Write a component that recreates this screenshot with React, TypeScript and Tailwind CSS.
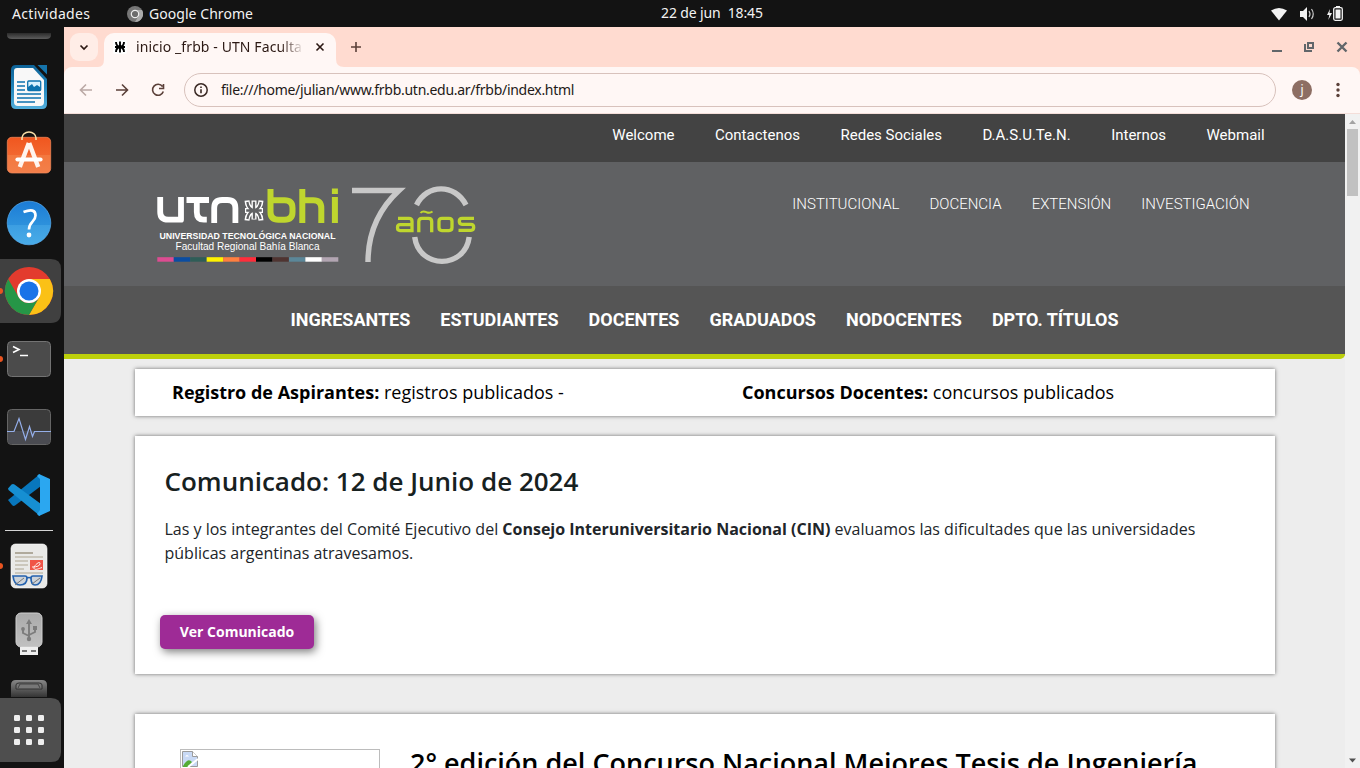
import React from 'react';

const stripes = ['#dd4c92', '#0b4da2', '#2f5d57', '#fff200', '#ff7f40', '#ff2d3b', '#000000', '#4f3431', '#5b8799', '#ffffff', '#b2a5b2'];

function TopBar() {
  return (
    <div className="flex h-[27px] w-full shrink-0 items-center bg-[#131313] pl-3 pr-4 text-[14px] leading-none text-[#f2f2f2]">
      <span className="w-[79px] tracking-[0.32px]">Actividades</span>
      <div className="ml-[36px] flex w-[534px] items-center gap-[6px]">
        <svg className="size-4 shrink-0" viewBox="0 0 16 16">
          <circle cx="8" cy="8" r="8" fill="#777" />
          <path d="M8 4h7A8 8 0 0 1 8 16l3.500-6Z" fill="#aaa" />
          <circle cx="8" cy="8" r="3.700" fill="#6c6c6c" stroke="#eee" strokeWidth="1.200" />
        </svg>
        <span className="tracking-[0.05px]">Google Chrome</span>
      </div>
      <span className="-mt-px whitespace-pre tracking-[-0.12px]">22 de jun  18:45</span>
      <svg className="ml-auto h-4 w-[74px] shrink-0" viewBox="1270 5 74 16" fill="#f2f2f2">
        <path d="M1271 9.500Q1279 4.500 1287 9.500L1279 19.500Z" />
        <path d="M1300 10h3l4-4v14l-4-4h-3Z" />
        <path d="M1309 10q2 3 0 6M1311.500 8q3.500 5 0 10" fill="none" stroke="#ccc" strokeWidth="1.200" />
        <path d="M1330 8l-3 6h2.300l-1 5 3.700-7h-2.500Z" />
        <rect x="1333.700" y="6.700" width="8.600" height="12.600" rx="1.500" fill="none" stroke="#f2f2f2" strokeWidth="1.300" />
        <path d="M1336 5h4v1.500h-4ZM1335.500 8.500h5v9h-5Z" />
      </svg>
    </div>
  );
}

function Dock() {
  return (
    <svg className="h-[741px] w-16 shrink-0 bg-[#131313]" viewBox="0 27 64 741">
      <defs>
        <linearGradient id="gray" x1="0" y1="0" x2="0" y2="1"><stop stopColor="#2b2b2b" /><stop offset="1" stopColor="#5c5c5c" /></linearGradient>
        <linearGradient id="doc" x1="0" y1="0" x2="0" y2="1"><stop stopColor="#0d6297" /><stop offset=".5" stopColor="#2083b9" /><stop offset="1" stopColor="#53afdc" /></linearGradient>
        <linearGradient id="bag" x1="0" y1="0" x2="0" y2="1"><stop stopColor="#f0561f" /><stop offset=".5" stopColor="#f2672f" /><stop offset=".51" stopColor="#f3783f" /><stop offset="1" stopColor="#f37f4a" /></linearGradient>
        <linearGradient id="help" x1="0" y1="0" x2="0" y2="1"><stop stopColor="#1c7cd6" /><stop offset=".54" stopColor="#2d91dc" /><stop offset=".55" stopColor="#3c9ee2" /><stop offset="1" stopColor="#49ace8" /></linearGradient>
        <linearGradient id="usb" x1="0" y1="0" x2="0" y2="1"><stop stopColor="#aaa" /><stop offset="1" stopColor="#c0c0c0" /></linearGradient>
        <linearGradient id="drive" x1="0" y1="0" x2="0" y2="1"><stop stopColor="#888" /><stop offset="1" stopColor="#343434" /></linearGradient>
      </defs>
      <path d="M7 33h44v2q0 4-5 4H12q-5 0-5-4Z" fill="url(#gray)" />

      <path d="M16 65h18l13 14v25q0 5-5 5H16q-5 0-5-5V70q0-5 5-5Z" fill="url(#doc)" />
      <path d="M17 68h16l11 12v22q0 4-4 4H18q-4 0-4-4V71q0-3 3-3Z" fill="#f8f8f8" />
      <path d="M37.500 65H47v9.500Z" fill="#1574ab" />
      <path d="M17 82h8M17 86h8M17 90h8M17 94h24M17 98h24M17 102h18" stroke="#0d72ae" strokeWidth="1.700" />
      <rect x="27.700" y="81" width="13" height="9.500" rx="1" fill="#d8f1ff" stroke="#0d72ae" strokeWidth="1.300" />
      <path d="M28 90v-3l4-3 2 3 3-2 3 2v3Z" fill="#0d72ae" />

      <rect x="7.300" y="137.300" width="43.400" height="35.700" rx="4.500" fill="url(#bag)" stroke="#f58a5c" strokeWidth=".7" />
      <path d="M22 140v-2a7 6 0 0 1 14 0v2" fill="none" stroke="#f8dda6" strokeWidth="1.600" />
      <path d="M28.800 143l-9 24M29.200 143l9 24" stroke="#fff4ee" strokeWidth="4.400" />
      <path d="M17.500 159.500h23" stroke="white" strokeWidth="4.200" strokeLinecap="round" />

      <circle cx="29" cy="223" r="21.800" fill="url(#help)" stroke="#58adf0" strokeWidth=".7" />
      <path d="M23.500 212q12-4.500 12 3.500c0 6.500-6.500 6-6.500 14" fill="none" stroke="white" strokeWidth="2.700" />
      <circle cx="29" cy="235" r="2.400" fill="white" />

      <path d="M0 259h51q10 0 10 10v43q0 11-10 11H0Z" fill="#404040" />
      <circle cx="29" cy="291" r="24" fill="#e33b2e" />
      <path d="M29 279h20.800A24 24 0 0 1 29 315l10.400-18Z" fill="#fbc116" />
      <path d="M8.200 279l10.400 18A12 12 0 0 0 39.400 297L29 315A24 24 0 0 1 8.200 279Z" fill="#269647" />
      <circle cx="29" cy="291" r="12" fill="white" />
      <circle cx="29" cy="291" r="9.500" fill="#1a73e8" />
      <g fill="#e95420"><circle cx="0" cy="291" r="3" /><circle cx="0" cy="359" r="3" /><circle cx="0" cy="566" r="3" /></g>

      <rect x="7.500" y="341.500" width="43" height="35" rx="4" fill="#4b4b4b" stroke="#737373" />
      <path d="M13 346.500l6 3-6 3" fill="none" stroke="white" strokeWidth="1.600" /><path d="M20 355.500h8" stroke="white" strokeWidth="1.500" />

      <rect x="7.500" y="409.500" width="43" height="35" rx="4" fill="#3b3b3b" stroke="#656565" />
      <path d="M8 431h42v9q0 4-4 4H12q-4 0-4-4Z" fill="#4a4b51" />
      <path d="M7 431.500h7l5-13 6.500 21 4-13 3 10 2-5H51" fill="none" stroke="#94aee9" strokeWidth="1.200" />

      <path d="M8 500l4 5q1.500 1.500 3 .5L41 486l-1-12Z" fill="#0877bd" />
      <path d="M8 488.500l3.500-4q1.500-1.200 3 0L41 504l-1 12L8.500 490Z" fill="#168fd2" />
      <path d="M39 474l11 5v32l-11 5-2-2 3-4v-31l-3-3Z" fill="#2ba7f0" />
      <path d="M5 530.500h48" stroke="#d4d4d4" />

      <rect x="11" y="544" width="36" height="44" rx="4.500" fill="#e9e9e7" stroke="white" strokeWidth=".6" />
      <path d="M15 553h18" stroke="#aaa393" strokeWidth="1.800" />
      <path d="M15 557h28M15 561h13M15 565h13M15 569h9M15 573h28" stroke="#c1bcaf" strokeWidth="1.700" />
      <rect x="30" y="560" width="13" height="10" fill="#f05347" />
      <path d="M32 567q8 0 8-3.500c0-3.500-7 3-6 5s5 0 8-1" fill="none" stroke="white" strokeWidth=".9" />
      <path d="M13 576h12q2 0 2 2c0 5-3 7-7 7q-6 0-7-9ZM31 578q0-2 2-2h9q-1 9-7 9-4 0-4-7Z" fill="#ccd3da" stroke="#2462ae" strokeWidth="1.700" />
      <path d="M27 578q2-1 4 0" fill="none" stroke="#2462ae" strokeWidth="1.700" />
      <path d="M15 585l9-7M32 584l8-6" stroke="#777" />

      <rect x="16" y="613" width="26" height="34" rx="5" fill="url(#usb)" stroke="#d0d0d0" />
      <path d="M20 647h18v8H20Z" fill="#eee" /><path d="M22 651h5M31 651h5" stroke="#777" strokeWidth="2" />
      <g fill="none" stroke="#7c7c7c" strokeWidth="1.900"><path d="M29 639v-17M29 636l-6-3v-4M29 635l6-3v-4" /></g>
      <g fill="#7c7c7c"><path d="M26 624l3-5 3 5Z" /><circle cx="29" cy="639" r="2.200" /><circle cx="23" cy="629" r="1.900" /><path d="M33 626h4v4h-4Z" /></g>

      <path d="M11 697v-12q0-5 5-5h26q5 0 5 5v12Z" fill="url(#drive)" />
      <path d="M16 689v-4q0-2 3-2h20q3 0 3 2v4Z" fill="#777" stroke="#333" /><path d="M18 688l2-4h18l2 4" fill="none" stroke="#444" />
      <path d="M0 698h51q10 0 10 10v44q0 10-10 10H0Z" fill="#4e4e4e" />
      <g fill="#eee">{[715, 727, 739].map((y) => [14, 26, 38].map((x) => <rect key={`${x}-${y}`} x={x} y={y} width="6" height="6" rx="1.200" />))}</g>
    </svg>
  );
}

function Chrome() {
  return (
    <div className="shrink-0 bg-[#ffdbd0] font-['Noto_Sans',sans-serif]">
      <div className="flex h-10 items-end">
        <div className="mb-[6px] ml-[6px] flex size-7 items-center justify-center rounded-[9px] bg-[#ffede7]">
          <svg className="size-3" viewBox="0 0 12 12"><path d="M2.500 4.500L6 8l3.500-3.500" fill="none" stroke="#2b1813" strokeWidth="1.700" /></svg>
        </div>
        <div className="flex h-[34px] w-[248px] shrink-0 items-end">
          <svg className="h-2 w-[6px]" viewBox="0 0 6 8"><path d="M6 0v8H0Q6 8 6 0Z" fill="#fff7f5" /></svg>
          <div className="flex h-[34px] w-[232px] items-center rounded-t-[10px] bg-[#fff7f5] pb-[6px] pl-2">
            <svg className="size-4 shrink-0" viewBox="0 0 16 16"><rect x="1" y="1" width="14" height="14" rx="2" fill="white" /><path d="M8 2.500v11M3 8h10M4 3q0 4 4 5 4-1 4-5M4 13q0-4 4-5 4 1 4 5" fill="none" stroke="black" strokeWidth="1.900" /></svg>
            <span className="-mt-[2px] ml-2 w-[168px] shrink-0 overflow-hidden whitespace-nowrap bg-linear-to-r from-[#2b1813] from-85% to-[#fff7f5] bg-clip-text text-[14px] tracking-[0.1px] text-transparent">inicio _frbb - UTN Faculta</span>
            <svg className="ml-[10px] size-3 shrink-0" viewBox="0 0 12 12"><path d="M2.500 2.500l7 7m0-7l-7 7" stroke="#2b1813" strokeWidth="1.600" /></svg>
          </div>
          <svg className="h-2 w-2" viewBox="0 0 8 8"><path d="M0 0v8h8Q0 8 0 0Z" fill="#fff7f5" /></svg>
        </div>
        <svg className="mb-[14px] ml-[4px] size-3" viewBox="0 0 12 12"><path d="M6 1v10M1 6h10" stroke="#5b4039" strokeWidth="1.600" /></svg>
        <svg className="mb-[10px] ml-auto mr-2 h-5 w-[86px]" viewBox="1266 37 86 20">
          <path d="M1272 51h10" stroke="#61666a" strokeWidth="2" />
          <path d="M1308 43h5v5h-5Z M1305 44v7h7" fill="none" stroke="#61666a" strokeWidth="2" />
          <path d="M1337.500 42.500l9 9m0-9l-9 9" stroke="#61666a" strokeWidth="2.400" />
        </svg>
      </div>
      <div className="flex h-[47px] items-center rounded-t-[8px] border-b border-[#f4ded9] bg-[#fff7f5] pl-[14px]">
        <svg className="h-5 w-[90px]" viewBox="78 80 90 20" fill="none" strokeWidth="1.600">
          <path d="M92 90H81M86 84.500L80.500 90l5.500 5.500" stroke="#bba9a5" />
          <path d="M116 90h11M122 84.500l5.500 5.500-5.500 5.500" stroke="#5b4039" />
          <path d="M162.500 86.500A5.500 5.500 0 1 0 163.300 91.500M163.500 84v4.500H159" stroke="#5b4039" />
        </svg>
        <div className="ml-4 flex h-[34px] w-[1092px] items-center rounded-full border border-[#d8c2bc] pl-[9px] text-[14px] text-[#231917]">
          <svg className="size-[14px]" viewBox="0 0 14 14"><circle cx="7" cy="7" r="6.200" fill="none" stroke="#3a2924" strokeWidth="1.500" /><path d="M7 6.200v4M7 3.500v1.500" stroke="#3a2924" strokeWidth="1.600" /></svg>
          <span className="-mt-[2px] ml-[13px] whitespace-nowrap tracking-[-0.28px]">file:///home/julian/www.frbb.utn.edu.ar/frbb/index.html</span>
        </div>
        <div className="ml-4 flex size-5 items-center justify-center rounded-full bg-[#8d6e63] text-[12px] leading-none text-white">j</div>
        <svg className="ml-[18px] h-4 w-4" viewBox="0 0 16 16" fill="#5b4039"><circle cx="8" cy="2.500" r="1.700" /><circle cx="8" cy="8" r="1.700" /><circle cx="8" cy="13.500" r="1.700" /></svg>
      </div>
    </div>
  );
}

function Logo() {
  return (
    <svg className="h-[90px] w-[330px]" viewBox="150 180 330 90">
      <g fill="none" stroke="white" strokeWidth="5.800">
        <path d="M160.200 197v15q0 7.700 8 7.700h12.800V197" strokeLinejoin="round" />
        <path d="M186.500 200H209M196.800 200V212q0 7.700 7 7.700h3" />
        <path d="M214.200 223v-15q0-8 8-8h5.200q8 0 8 8v15" />
      </g>
      <g fill="none" stroke="#bfd62e" strokeWidth="6">
        <path d="M270.500 189v23q0 7.700 8 7.700h6q8 0 8-7.700v-4q0-7.700-8-7.700h-13" />
        <path d="M302.300 189v34M302.300 200.300h11q8 0 8 8V223M334.900 197v26M334.900 188.500v5.500" />
      </g>
      <g fill="none">
        <path d="M254 200.500v19M245 210.500h18M247 200.500q.5 8 7 10 6.500-2 7-10M247 220.500q.5-8 7-10 6.500 2 7 10" stroke="white" strokeWidth="5" />
        <path d="M254 201.700v17M246.200 210.500h15.600M247.300 202q1 7 6.700 8.500 5.700-1.500 6.700-8.500M247.300 219q1-7 6.700-8.500 5.700 1.500 6.700 8.500" stroke="#606163" strokeWidth="2.300" />
      </g>
      <g fill="white" className="font-['Liberation_Sans',sans-serif]">
        <text x="159.500" y="239.300" fontSize="9.500" fontWeight="700" textLength="176" lengthAdjust="spacingAndGlyphs">UNIVERSIDAD TECNOLÓGICA NACIONAL</text>
        <text x="175.500" y="250" fontSize="10.600" textLength="144" lengthAdjust="spacingAndGlyphs">Facultad Regional Bahía Blanca</text>
      </g>
      {stripes.map((c, i) => <rect key={c} x={157.300 + i * 16.450} y="257.200" width="16.500" height="4.500" fill={c} />)}
      <g fill="none" stroke="#c8c8c8" strokeWidth="5.400">
        <path d="M352 190.500h47Q368 219 368 262" />
        <path d="M416.500 205C427 183.500 455 183.500 466 205M414.700 237C419 269.500 465 269.500 469.200 237" />
      </g>
      <g fill="none" stroke="#bfd62e" strokeWidth="3.300">
        <path d="M398 218.300H409q3 0 3 3V230.600h-12q-2.500 0-2.500-3t2.500-3h12" />
        <path d="M418.800 232.200v-10.700q0-3.200 3.200-3.200h6.500q3.200 0 3.200 3.200v10.700" />
        <path d="M420.500 213q2-2.500 6-.8 3.500 1.200 6-.7" strokeWidth="2" />
        <path d="M442 218.300h7q3 0 3 3v6.300q0 3-3 3h-7q-3 0-3-3v-6.300q0-3 3-3Z" />
        <path d="M474 218.300H462q-2.700 0-2.700 3t2.700 3h9q2.700 0 2.700 3t-2.700 3h-12.500" />
      </g>
    </svg>
  );
}

function Site() {
  return (
    <main className="flex min-w-0 flex-1 flex-col overflow-hidden bg-[#ededed] font-['Open_Sans',sans-serif]">
      <header className="shrink-0 overflow-hidden rounded-br-[5px] border-b-[5px] border-[#bccf0b] bg-[#555] font-[Roboto,sans-serif] text-white">
        <nav className="flex h-12 justify-end gap-[40.500px] bg-[#434343] pr-[80.400px] pt-[10px] text-[15px] leading-[22px]">
          <a>Welcome</a><a>Contactenos</a><a>Redes Sociales</a><a>D.A.S.U.Te.N.</a><a>Internos</a><a>Webmail</a>
        </nav>
        <div className="flex h-[124px] justify-between bg-[#606163] pl-[86px] pr-[95.400px] pt-[18px]">
          <Logo />
          <nav className="flex gap-[30px] pt-[13px] text-[15px] font-light leading-[22px]">
            <a>INSTITUCIONAL</a><a>DOCENCIA</a><a>EXTENSIÓN</a><a>INVESTIGACIÓN</a>
          </nav>
        </div>
        <nav className="flex h-[68px] items-center justify-center gap-[30px] pb-[2px] text-[18px] font-bold">
          <a>INGRESANTES</a><a>ESTUDIANTES</a><a>DOCENTES</a><a>GRADUADOS</a><a>NODOCENTES</a><a>DPTO. TÍTULOS</a>
        </nav>
      </header>
      <div className="flex flex-col pl-[71px] pr-[70px] pt-[10px]">
        <section className="flex h-[47px] items-center bg-white pl-[37px] text-[18px] text-black shadow-[0_0_4px_rgba(0,0,0,.55)]">
          <p className="w-[570px]"><b>Registro de Aspirantes:</b> registros publicados -</p>
          <p><b>Concursos Docentes:</b> concursos publicados</p>
        </section>
        <section className="mt-5 h-[238px] bg-white pl-[29.500px] pr-[30px] pt-[29px] text-[#212529] shadow-[0_0_4px_rgba(0,0,0,.55)]">
          <h1 className="text-[26px] font-semibold leading-[32px] text-[#17211f]">Comunicado: 12 de Junio de 2024</h1>
          <p className="mt-[20px] text-[16px] leading-6">Las y los integrantes del Comité Ejecutivo del <b>Consejo Interuniversitario Nacional (CIN)</b> evaluamos las dificultades que las universidades<br />públicas argentinas atravesamos.</p>
          <button className="-ml-[4.500px] mt-[50px] flex h-[34px] w-[154px] items-center justify-center rounded-[5px] bg-[#9e2b96] pb-[2px] text-[14px] font-bold text-white shadow-[2px_3px_9px_rgba(0,0,0,.5)]">Ver Comunicado</button>
        </section>
        <section className="mt-10 flex h-[180px] bg-white pl-[45px] pt-[35px] shadow-[0_0_4px_rgba(0,0,0,.55)]">
          <div className="h-[150px] w-[200px] border border-[#bcbcbc] p-px">
            <svg className="size-4" viewBox="0 0 16 16"><path d="M.5.500h10l5 5v10H.500Z" fill="#c8d9f5" stroke="#9b9b9b" /><path d="M10.500.500v5h5" fill="white" stroke="#9b9b9b" /><path d="M1 15q5-9 9-4l-4 5H1Z" fill="#55ad35" /><path d="M3 5.500q2-3 4 0Z" fill="white" /><path d="M6 16l10-8" stroke="white" strokeWidth="2" /></svg>
          </div>
          <h2 className="-mt-[2px] ml-[30px] whitespace-nowrap text-[27px] font-semibold leading-[32px] text-black">2° edición del Concurso Nacional Mejores Tesis de Ingeniería</h2>
        </section>
      </div>
    </main>
  );
}

export default function App() {
  return (
    <div className="flex h-[768px] w-[1360px] flex-col overflow-hidden font-['Noto_Sans',sans-serif]">
      <TopBar />
      <div className="flex min-h-0 flex-1">
        <Dock />
        <div className="flex min-w-0 flex-1 flex-col">
          <Chrome />
          <div className="flex min-h-0 flex-1">
            <Site />
            <div className="flex w-[15px] shrink-0 flex-col items-center bg-[#f1f1f1]">
              <svg className="h-[15px] w-[15px] shrink-0" viewBox="0 0 15 15"><path d="M4 10l3.500-4 3.500 4Z" fill="#a3a3a3" /></svg>
              <div className="h-[67px] w-[11px] bg-[#c1c1c1]" />
              <svg className="mt-auto h-[15px] w-[15px] shrink-0" viewBox="0 0 15 15"><path d="M4 5.500l3.500 4 3.500-4Z" fill="#505050" /></svg>
            </div>
          </div>
        </div>
      </div>
    </div>
  );
}
